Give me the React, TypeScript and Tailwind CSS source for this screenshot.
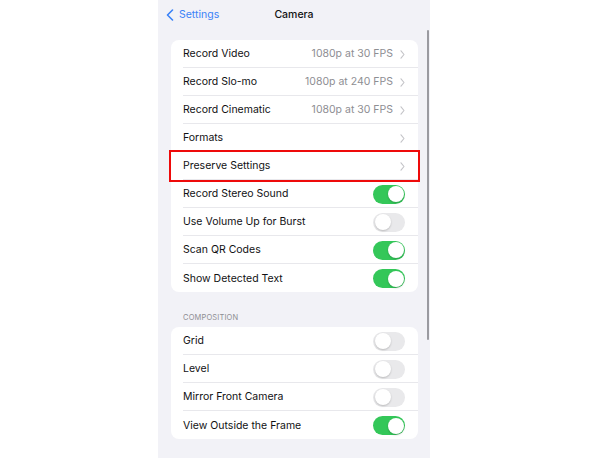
import React from "react";

type Row = {
  label: string;
  value?: string;
  chevron?: boolean;
  toggle?: boolean;
  on?: boolean;
  highlight?: boolean;
};

const mainRows: Row[] = [
  { label: "Record Video", value: "1080p at 30 FPS", chevron: true },
  { label: "Record Slo-mo", value: "1080p at 240 FPS", chevron: true },
  { label: "Record Cinematic", value: "1080p at 30 FPS", chevron: true },
  { label: "Formats", chevron: true },
  { label: "Preserve Settings", chevron: true, highlight: true },
  { label: "Record Stereo Sound", toggle: true, on: true },
  { label: "Use Volume Up for Burst", toggle: true, on: false },
  { label: "Scan QR Codes", toggle: true, on: true },
  { label: "Show Detected Text", toggle: true, on: true },
];

const compositionRows: Row[] = [
  { label: "Grid", toggle: true, on: false },
  { label: "Level", toggle: true, on: false },
  { label: "Mirror Front Camera", toggle: true, on: false },
  { label: "View Outside the Frame", toggle: true, on: true },
];

const Chevron = () => (
  <svg width="5" height="9" viewBox="0 0 5 9" fill="none" className="ml-[7px]">
    <path d="M1 0.8 L4 4.5 L1 8.2" stroke="#c4c4c8" strokeWidth="1.1" strokeLinecap="round" strokeLinejoin="round" />
  </svg>
);

const Toggle = ({ on }: { on?: boolean }) => (
  <div
    className={
      on
        ? "w-[32px] h-[19px] rounded-full bg-[#34c759] flex items-center justify-end px-[1.5px]"
        : "w-[32px] h-[19px] rounded-full bg-[#e9e9eb] flex items-center justify-start px-[1.5px]"
    }
  >
    <div className="w-[16px] h-[16px] rounded-full bg-white shadow-[0_1px_2px_rgba(0,0,0,0.2)]" />
  </div>
);

const SettingsCard = ({ rows }: { rows: Row[] }) => (
  <div className="ml-[13px] mr-[12px] bg-white rounded-[8px]">
    {rows.map((row, idx) => (
      <div key={row.label} className="relative h-[28px] pl-[12px]">
        <div
          className={
            idx === rows.length - 1
              ? "h-full flex items-center pr-[13px] pt-[1px]"
              : "h-full flex items-center pr-[13px] pt-[1px] border-b border-[#e8e8ec]"
          }
        >
          <span className="flex-1 text-[10.5px] text-[#111113]">{row.label}</span>
          {row.value && <span className="text-[10.5px] text-[#8e8e93]">{row.value}</span>}
          {row.chevron && <Chevron />}
          {row.toggle && <Toggle on={row.on} />}
        </div>
        {row.highlight && (
          <div className="absolute -top-[2px] -bottom-[2px] -left-[2px] -right-[2px] border-2 border-[#ee0a0a]" />
        )}
      </div>
    ))}
  </div>
);

const App: React.FC = () => {
  return (
    <div
      className="w-[600px] h-[461px] bg-white pl-[158px]"
      style={{ fontFamily: "Inter, 'Noto Sans', sans-serif" }}
    >
      <div className="relative w-[272px] h-[458px] bg-[#f2f2f7]">
        <div className="relative h-[29px] flex items-center">
          <div className="flex items-center pl-[8px] text-[#3a82f7]">
            <svg width="8" height="12" viewBox="0 0 8 12" fill="none">
              <path d="M6.5 1 L1.5 6 L6.5 11" stroke="#3a82f7" strokeWidth="1.6" strokeLinecap="round" strokeLinejoin="round" />
            </svg>
            <span className="ml-[5px] text-[10.5px]">Settings</span>
          </div>
          <div className="absolute inset-0 flex items-center justify-center text-[10.5px] font-medium text-[#111]">
            Camera
          </div>
        </div>
        <div className="mt-[11px]">
          <SettingsCard rows={mainRows} />
        </div>
        <div className="mt-[20px] pl-[25px] h-[14px] text-[7.5px] text-[#8e8e93] tracking-[0.02em]">COMPOSITION</div>
        <div className="mt-[1px]">
          <SettingsCard rows={compositionRows} />
        </div>
        <div className="absolute left-[269px] top-[30px] w-[1.5px] h-[310px] bg-[#9a9aa0] rounded-full" />
      </div>
    </div>
  );
};

export default App;
